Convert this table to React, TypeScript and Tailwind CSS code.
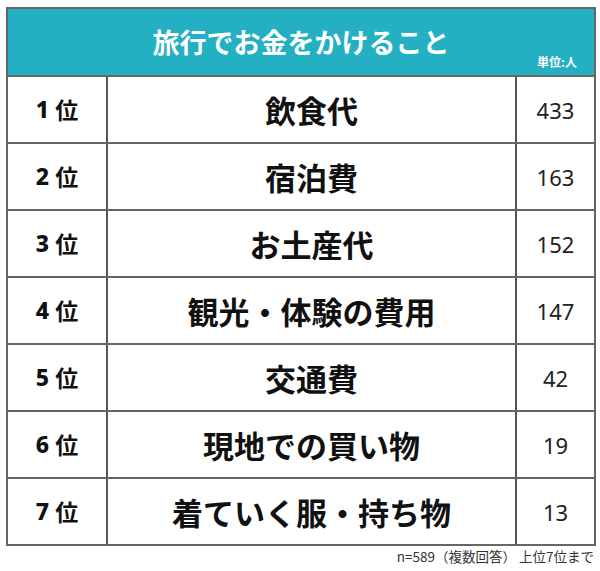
const rows = [
  { rank: '1', item: '飲食代', count: 433 },
  { rank: '2', item: '宿泊費', count: 163 },
  { rank: '3', item: 'お土産代', count: 152 },
  { rank: '4', item: '観光・体験の費用', count: 147 },
  { rank: '5', item: '交通費', count: 42 },
  { rank: '6', item: '現地での買い物', count: 19 },
  { rank: '7', item: '着ていく服・持ち物', count: 13 },
]

const jp = "font-['Noto_Sans_CJK_JP',sans-serif]"

export default function App() {
  return (
    <div className={`w-[600px] h-[571px] bg-white pt-[7px] pl-[6px] ${jp}`}>
      <div className="w-[590px] border-2 border-[#666]">
        {/* 見出し */}
        <div className="relative h-[66px] bg-[#23b0c3] flex items-center justify-center">
          <h1 className="text-white text-[27px] font-bold leading-none -mt-[2px]">旅行でお金をかけること</h1>
          <span className="absolute right-[17px] bottom-[7px] text-white text-[12px] font-bold leading-none">単位:人</span>
        </div>

        {rows.map((r) => (
          <div key={r.rank} className="grid grid-cols-[98px_409px_79px] h-[67px] border-t-2 border-[#666]">
            <div className="flex items-center justify-center text-[23px] font-bold text-[#111] leading-none">
              <span className="font-['Noto_Sans',sans-serif] font-extrabold">{r.rank}</span>
              <span className="ml-[6px]">位</span>
            </div>
            <div className="flex items-center justify-center border-l-2 border-[#555] text-[31px] font-bold text-[#111] leading-none">
              {r.item}
            </div>
            <div className="flex items-center justify-center border-l-2 border-[#555] font-['Noto_Sans',sans-serif] text-[22px] text-[#222] leading-none">
              {r.count}
            </div>
          </div>
        ))}
      </div>
      <p className="w-[590px] pr-[2px] text-right text-[13.5px] text-[#333] mt-[4px] leading-none">
        n=589（複数回答） 上位7位まで
      </p>
    </div>
  )
}
